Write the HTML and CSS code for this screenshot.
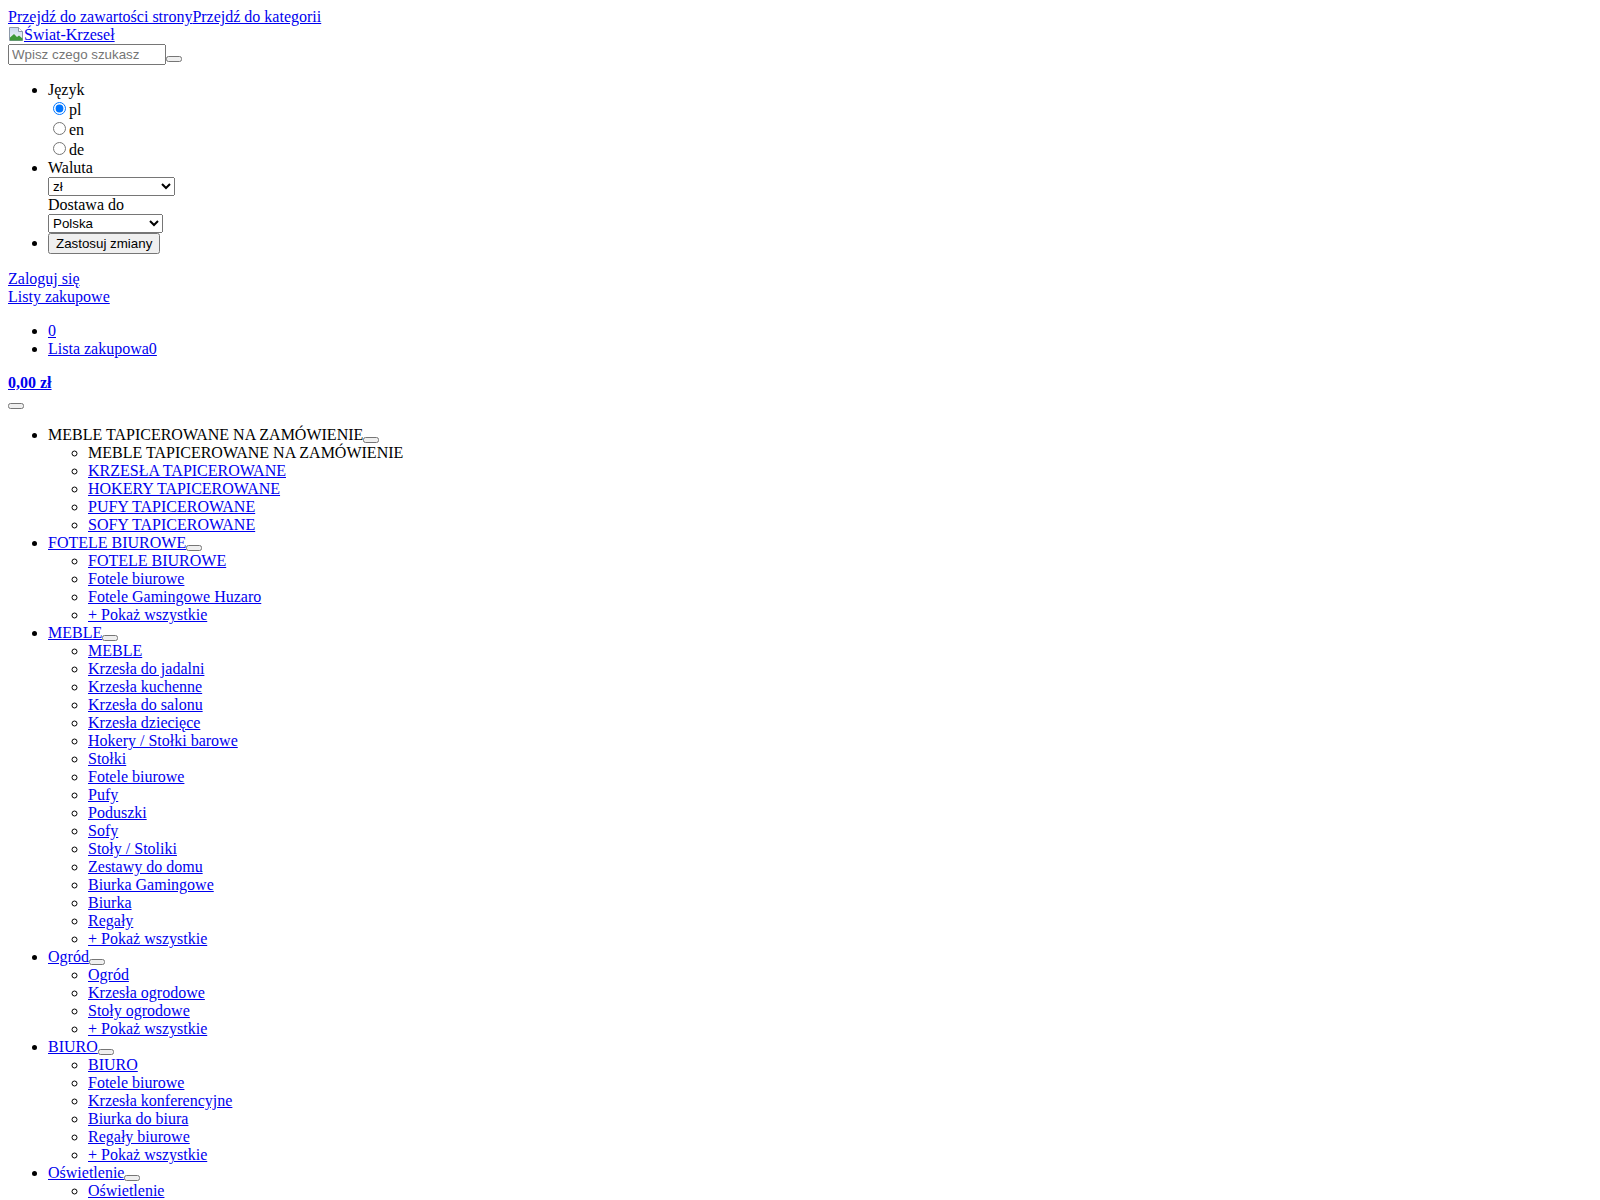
FILE: index.html
```html
<!DOCTYPE html>
<html lang="pl">
<head>
<meta charset="utf-8">
<title>Świat-Krzeseł</title>
<link rel="stylesheet" href="styles.css">
</head>
<body>
<div class="skip"><a href="#content">Przejdź do zawartości strony</a><a href="#menu">Przejdź do kategorii</a></div>
<div class="logo"><a href="#"><svg class="broken" width="16" height="16" viewBox="0 0 16 16" aria-hidden="true"><defs><linearGradient id="sky" x1="0" y1="0" x2="0" y2="1"><stop offset="0" stop-color="#c9d9ee"/><stop offset="1" stop-color="#f4f7fb"/></linearGradient></defs><path d="M1.5 1.5h9l4 4v9h-13z" fill="url(#sky)" stroke="#8c98a8"/><path d="M10.5 1.5v4h4" fill="#fff" stroke="#8c98a8"/><path d="M2 14.5v-3l4-3.5 3 3 2-1.5 3.5 3v2z" fill="#3f9a3a"/></svg>Świat-Krzeseł</a></div>
<form class="search"><input type="text" placeholder="Wpisz czego szukasz" class="search-input"><button type="submit" class="empty-btn"></button></form>
<ul>
<li>Język
<div><input type="radio" name="lang" checked class="radio"><label>pl</label></div>
<div><input type="radio" name="lang" class="radio"><label>en</label></div>
<div><input type="radio" name="lang" class="radio"><label>de</label></div>
</li>
<li>Waluta
<div><select class="sel-cur"><option>zł</option></select></div>
<div>Dostawa do</div>
<div><select class="sel-country"><option>Polska</option></select></div>
</li>
<li><button type="button" class="apply">Zastosuj zmiany</button></li>
</ul>
<div><a href="#">Zaloguj się</a></div>
<div><a href="#">Listy zakupowe</a></div>
<ul>
<li><a href="#">0</a></li>
<li><a href="#">Lista zakupowa0</a></li>
</ul>
<p class="total"><strong><a href="#">0,00 zł</a></strong></p>
<div><button type="button" class="empty-btn"></button></div>
<ul id="menu">
<li>MEBLE TAPICEROWANE NA ZAMÓWIENIE<button type="button" class="empty-btn"></button>
<ul>
<li>MEBLE TAPICEROWANE NA ZAMÓWIENIE</li>
<li><a href="#">KRZESŁA TAPICEROWANE</a></li>
<li><a href="#">HOKERY TAPICEROWANE</a></li>
<li><a href="#">PUFY TAPICEROWANE</a></li>
<li><a href="#">SOFY TAPICEROWANE</a></li>
</ul>
</li>
<li><a href="#">FOTELE BIUROWE</a><button type="button" class="empty-btn"></button>
<ul>
<li><a href="#">FOTELE BIUROWE</a></li>
<li><a href="#">Fotele biurowe</a></li>
<li><a href="#">Fotele Gamingowe Huzaro</a></li>
<li><a href="#">+ Pokaż wszystkie</a></li>
</ul>
</li>
<li><a href="#">MEBLE</a><button type="button" class="empty-btn"></button>
<ul>
<li><a href="#">MEBLE</a></li>
<li><a href="#">Krzesła do jadalni</a></li>
<li><a href="#">Krzesła kuchenne</a></li>
<li><a href="#">Krzesła do salonu</a></li>
<li><a href="#">Krzesła dziecięce</a></li>
<li><a href="#">Hokery / Stołki barowe</a></li>
<li><a href="#">Stołki</a></li>
<li><a href="#">Fotele biurowe</a></li>
<li><a href="#">Pufy</a></li>
<li><a href="#">Poduszki</a></li>
<li><a href="#">Sofy</a></li>
<li><a href="#">Stoły / Stoliki</a></li>
<li><a href="#">Zestawy do domu</a></li>
<li><a href="#">Biurka Gamingowe</a></li>
<li><a href="#">Biurka</a></li>
<li><a href="#">Regały</a></li>
<li><a href="#">+ Pokaż wszystkie</a></li>
</ul>
</li>
<li><a href="#">Ogród</a><button type="button" class="empty-btn"></button>
<ul>
<li><a href="#">Ogród</a></li>
<li><a href="#">Krzesła ogrodowe</a></li>
<li><a href="#">Stoły ogrodowe</a></li>
<li><a href="#">+ Pokaż wszystkie</a></li>
</ul>
</li>
<li><a href="#">BIURO</a><button type="button" class="empty-btn"></button>
<ul>
<li><a href="#">BIURO</a></li>
<li><a href="#">Fotele biurowe</a></li>
<li><a href="#">Krzesła konferencyjne</a></li>
<li><a href="#">Biurka do biura</a></li>
<li><a href="#">Regały biurowe</a></li>
<li><a href="#">+ Pokaż wszystkie</a></li>
</ul>
</li>
<li><a href="#">Oświetlenie</a><button type="button" class="empty-btn"></button>
<ul>
<li><a href="#">Oświetlenie</a></li>
</ul>
</li>
</ul>
</body>
</html>
```

FILE: styles.css
```css
body {
  font-family: "Liberation Serif", "Times New Roman", serif;
  font-size: 16px;
  color: #000;
  background: #fff;
}

input, select, button {
  font-family: "Liberation Sans", Arial, sans-serif;
  font-size: 13.3333px;
}

.broken {
  vertical-align: -2px;
}

.search-input {
  width: 150px;
  box-sizing: content-box;
}

.radio {
  margin: 3px 3px 0 5px;
}

.sel-cur {
  width: 127px;
}

.sel-country {
  width: 115px;
}

.total {
  margin-bottom: 0;
}
```
